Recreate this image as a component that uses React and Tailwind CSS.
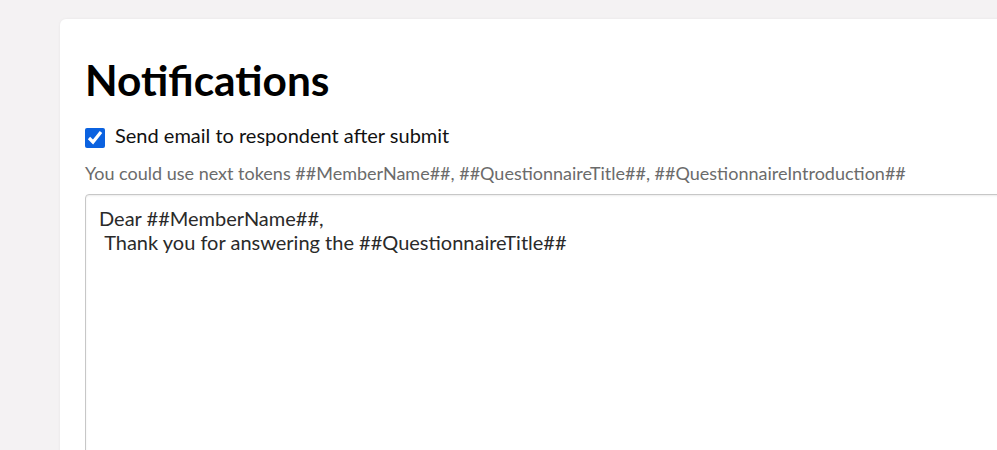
export default function App() {
  return (
    <div className="w-[997px] h-[450px] overflow-hidden bg-[#f4f2f3] pl-[60px] pt-[19px]" style={{ fontFamily: "Lato, 'Open Sans', sans-serif" }}>
      <div className="w-[960px] h-[480px] bg-white rounded-[6px] shadow-[0_0_3px_rgba(0,0,0,0.06)] pl-[25px] pt-[36px]">
        <h1 className="text-[42.4px] leading-[50px] font-bold text-black">Notifications</h1>
        <label className="mt-[18px] flex items-start gap-[10px]">
          <input type="checkbox" defaultChecked className="mt-[5px] w-[20px] h-[20px] accent-[#0b62e0] m-0 shrink-0" />
          <span className="text-[20px] leading-[24px] text-[#111]">Send email to respondent after submit</span>
        </label>
        <p className="mt-[14px] text-[18px] leading-[22px] text-[#6b6b6b]">
          You could use next tokens ##MemberName##, ##QuestionnaireTitle##, ##QuestionnaireIntroduction##
        </p>
        <textarea
          className="mt-[10px] block w-[940px] h-[300px] border border-[#c7c7c7] rounded-[4px] shadow-[inset_0_1px_2px_rgba(0,0,0,0.08)] pl-[13px] pr-[13px] pt-[11px] text-[20px] leading-[24px] text-[#2a2a2a] resize-none outline-none"
          style={{ fontFamily: "Lato, sans-serif" }}
          defaultValue={"Dear ##MemberName##,\n Thank you for answering the ##QuestionnaireTitle##"}
        />
      </div>
    </div>
  );
}
